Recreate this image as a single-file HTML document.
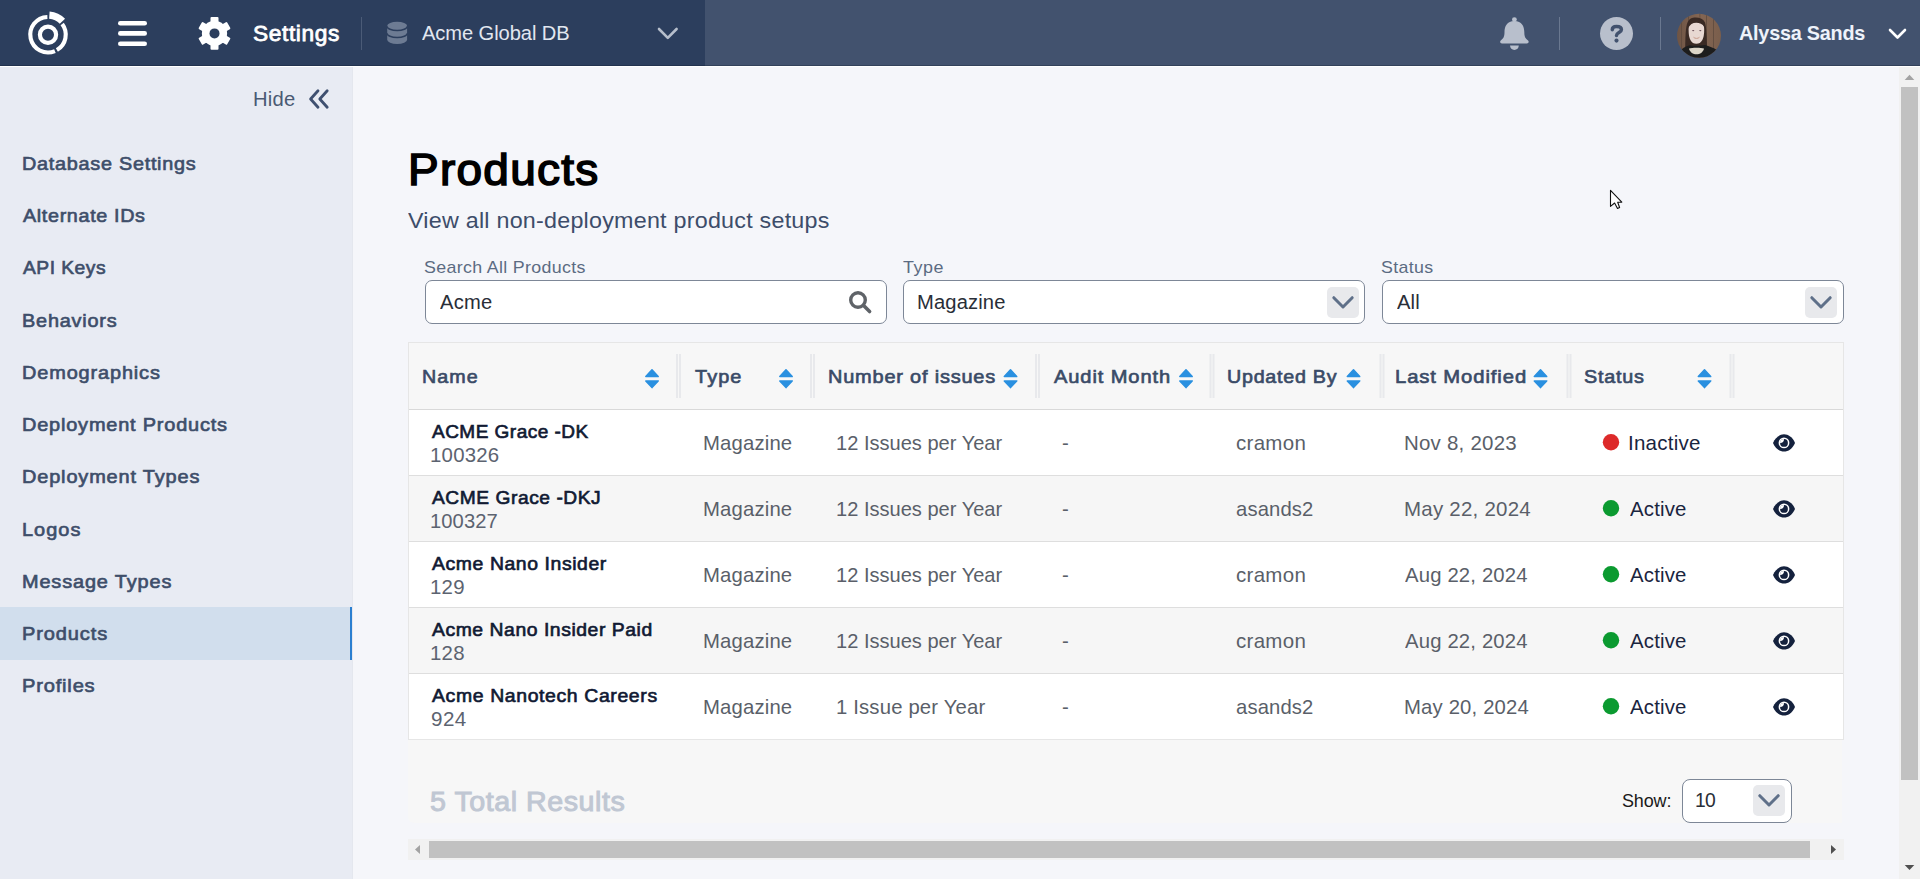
<!DOCTYPE html><html><head><meta charset="utf-8"><title>Products</title><style>
*{margin:0;padding:0;box-sizing:border-box}
html,body{width:1920px;height:879px;overflow:hidden;background:#f5f6fa;font-family:"Liberation Sans", sans-serif}
.t{position:absolute;white-space:nowrap;transform-origin:0 0}
.b{position:absolute}
</style></head><body>
<div class="b" style="left:0px;top:0px;width:705px;height:66px;background:#2c3e5d"></div>
<div class="b" style="left:705px;top:0px;width:1215px;height:66px;background:#42526e"></div>
<div class="b" style="left:0px;top:65px;width:1920px;height:1px;background:rgba(10,20,40,0.28)"></div>
<div class="b" style="left:0px;top:66px;width:1920px;height:1px;background:#ffffff"></div>
<div class="b" style="left:0px;top:67px;width:352px;height:812px;background:#e8ebf3"></div>
<div class="b" style="left:352px;top:67px;width:1px;height:812px;background:#e4e7ee"></div>
<div class="b" style="left:0px;top:607px;width:350px;height:52.5px;background:#d1deed"></div>
<div class="b" style="left:350px;top:607px;width:2px;height:52.5px;background:#2b7fd0"></div>
<div class="b" style="left:425px;top:280px;width:462px;height:44px;background:#fff;border:1.5px solid #7d8797;border-radius:7px"></div>
<div class="b" style="left:903px;top:280px;width:462px;height:44px;background:#fff;border:1.5px solid #7d8797;border-radius:7px"></div>
<div class="b" style="left:1382px;top:280px;width:462px;height:44px;background:#fff;border:1.5px solid #7d8797;border-radius:7px"></div>
<div class="b" style="left:408px;top:342px;width:1436px;height:398px;background:#fff;border:1px solid #e6e6e6"></div>
<div class="b" style="left:409px;top:343px;width:1434px;height:66px;background:#f7f7f7"></div>
<div class="b" style="left:409px;top:409px;width:1434px;height:1px;background:#d9d9d9"></div>
<div class="b" style="left:409px;top:475px;width:1434px;height:1px;background:#dedede"></div>
<div class="b" style="left:409px;top:476px;width:1434px;height:65px;background:#f6f6f6"></div>
<div class="b" style="left:409px;top:541px;width:1434px;height:1px;background:#dedede"></div>
<div class="b" style="left:409px;top:607px;width:1434px;height:1px;background:#dedede"></div>
<div class="b" style="left:409px;top:608px;width:1434px;height:65px;background:#f6f6f6"></div>
<div class="b" style="left:409px;top:673px;width:1434px;height:1px;background:#dedede"></div>
<div class="b" style="left:408px;top:740px;width:1434px;height:83px;background:#f7f7f7;border-bottom-left-radius:6px"></div>
<div class="b" style="left:1682px;top:779px;width:110px;height:44px;background:#fff;border:1.5px solid #7d8797;border-radius:8px"></div>
<div class="b" style="left:408px;top:839px;width:1436px;height:21px;background:#f1f1f1"></div>
<div class="b" style="left:429px;top:841px;width:1381px;height:16.5px;background:#c1c1c1"></div>
<div class="b" style="left:1899px;top:67px;width:21px;height:812px;background:#f1f1f1"></div>
<div class="b" style="left:1901px;top:87px;width:17px;height:692.6px;background:#c1c1c1"></div>
<svg class="b" style="left:0;top:0" width="1920" height="879" viewBox="0 0 1920 879"><circle cx="48" cy="34.7" r="8.1" stroke="#ffffff" stroke-width="4.2" fill="none"/><path d="M54.94 51.04 A17.75 17.75 0 1 1 47.38 16.96" stroke="#ffffff" stroke-width="4.1" fill="none"/><path d="M62.18 24.02 A17.75 17.75 0 0 1 56.88 50.07" stroke="#ffffff" stroke-width="4.1" fill="none"/><path d="M49.37 15.05 A19.7 19.7 0 0 1 62.41 21.26" stroke="#ffffff" stroke-width="7.2" fill="none"/><rect x="118" y="21.0" width="29" height="4.6" rx="2.3" fill="#fff"/><rect x="118" y="31.099999999999998" width="29" height="4.6" rx="2.3" fill="#fff"/><rect x="118" y="41.5" width="29" height="4.6" rx="2.3" fill="#fff"/><circle cx="214.5" cy="33.4" r="12.6" fill="#fff"/><rect x="210.5" y="17.0" width="8.0" height="16.4" rx="1" fill="#fff" transform="rotate(0 214.5 33.4)"/><rect x="210.5" y="17.0" width="8.0" height="16.4" rx="1" fill="#fff" transform="rotate(60 214.5 33.4)"/><rect x="210.5" y="17.0" width="8.0" height="16.4" rx="1" fill="#fff" transform="rotate(120 214.5 33.4)"/><rect x="210.5" y="17.0" width="8.0" height="16.4" rx="1" fill="#fff" transform="rotate(180 214.5 33.4)"/><rect x="210.5" y="17.0" width="8.0" height="16.4" rx="1" fill="#fff" transform="rotate(240 214.5 33.4)"/><rect x="210.5" y="17.0" width="8.0" height="16.4" rx="1" fill="#fff" transform="rotate(300 214.5 33.4)"/><circle cx="214.5" cy="33.4" r="5.0" fill="#2c3e5d"/><rect x="361" y="17" width="1" height="33" fill="#4b5b77"/><path d="M387.2 26 A9.95 4.2 0 0 1 407.1 26 L407.1 39.8 A9.95 4.2 0 0 1 387.2 39.8 Z" fill="#6d7b93"/><path d="M387 26.2 A10.1 4.3 0 0 0 407.3 26.2" stroke="#2c3e5d" stroke-width="1.5" fill="none"/><path d="M387 33.2 A10.1 4.3 0 0 0 407.3 33.2" stroke="#2c3e5d" stroke-width="1.5" fill="none"/><path d="M659 29 L667.8 37.8 L676.6 29" stroke="#b7bfcc" stroke-width="2.6" fill="none" stroke-linecap="round" stroke-linejoin="round"/><circle cx="1514.4" cy="19.6" r="2.4" fill="#b8bfcc"/><path d="M1514.4 21 C1507 21 1504.5 26.5 1504.5 32 C1504.5 36.5 1503.5 38.5 1501 40.2 C1499.5 41.2 1500 43.4 1502 43.4 L1526.8 43.4 C1528.8 43.4 1529.3 41.2 1527.8 40.2 C1525.3 38.5 1524.3 36.5 1524.3 32 C1524.3 26.5 1521.8 21 1514.4 21 Z" fill="#b8bfcc"/><path d="M1510 45.6 L1518.8 45.6 C1518.8 48.2 1516.8 50 1514.4 50 C1512 50 1510 48.2 1510 45.6 Z" fill="#b8bfcc"/><rect x="1559" y="17" width="1" height="33" fill="#6a7890"/><circle cx="1616.5" cy="33.5" r="16.5" fill="#b8bfcc"/><path d="M1612.3 29.8 C1612.3 27 1614.2 26.6 1616.6 26.6 C1619.6 26.6 1621.4 27.6 1621.4 29.8 C1621.4 32.6 1616.5 32.6 1616.5 35.6" stroke="#42526e" stroke-width="3.5" fill="none" stroke-linecap="round"/><circle cx="1616.5" cy="40.6" r="2.05" fill="#42526e"/><rect x="1660" y="17" width="1" height="33" fill="#6a7890"/><defs><clipPath id="av"><circle cx="1699" cy="35.8" r="22"/></clipPath><linearGradient id="wood" x1="0" x2="1"><stop offset="0" stop-color="#6e5444"/><stop offset="0.5" stop-color="#846653"/><stop offset="1" stop-color="#7a5e4c"/></linearGradient></defs><g clip-path="url(#av)"><rect x="1677" y="13" width="44" height="45" fill="url(#wood)"/><rect x="1681" y="13" width="0.8" height="45" fill="#5e4a3e"/><rect x="1688" y="13" width="0.8" height="45" fill="#5e4a3e"/><rect x="1699.5" y="13" width="0.8" height="45" fill="#604c40"/><rect x="1706" y="13" width="0.8" height="45" fill="#5e4a3e"/><rect x="1713" y="13" width="0.8" height="45" fill="#5e4a3e"/><path d="M1685.2 48 C1685.3 38 1685.5 27 1687.5 22.5 C1689.5 18.5 1692 17.6 1695.5 17.6 C1700 17.6 1703.5 19.5 1705 22.5 C1706.5 27 1706.8 38 1707 48 Z" fill="#3a2a24"/><path d="M1688.6 30 C1688.6 24 1691 20.8 1696.3 20.8 C1701.8 20.8 1704.2 24 1704.2 30 C1704.2 39 1701.5 43.8 1696.3 43.8 C1691.2 43.8 1688.6 39 1688.6 30 Z" fill="#e8d8d2"/><path d="M1688.2 28 C1688.5 21.5 1692 19.5 1696.3 19.5 C1701 19.5 1704.3 21.5 1704.5 27 C1702.5 24 1699.5 22.8 1696.3 22.8 C1692.5 22.8 1690 24.5 1688.2 28 Z" fill="#3a2a24"/><ellipse cx="1693.2" cy="30.6" rx="1.1" ry="0.6" fill="#6a5058"/><ellipse cx="1700.3" cy="30.6" rx="1.1" ry="0.6" fill="#6a5058"/><path d="M1693.5 37.2 C1695 38.8 1698 38.8 1699.5 37.2" stroke="#c89a8a" stroke-width="1" fill="none"/><path d="M1680 60 L1682 49 C1684 47 1688 45.5 1690 45.2 C1693 46 1700 46 1705 45 C1709 46 1714 48 1717 50 L1720 60 Z" fill="#1d1d1d"/><path d="M1689 48.5 C1692 47.5 1701 47.5 1704 48.5 C1703 52.5 1700 54.3 1696.5 54.3 C1693 54.3 1690 52.5 1689 48.5 Z" fill="#ddd6c8"/></g><path d="M1890 30 L1897.5 37.5 L1905 30" stroke="#ffffff" stroke-width="2.6" fill="none" stroke-linecap="round" stroke-linejoin="round"/><path d="M318 90.8 L310.6 99 L318 107.2 M327.2 90.8 L319.8 99 L327.2 107.2" stroke="#3f5070" stroke-width="2.8" fill="none" stroke-linecap="round" stroke-linejoin="round"/><circle cx="858" cy="300" r="7.3" stroke="#5f6368" stroke-width="3.4" fill="none"/><path d="M863.6 305.6 L869.6 311.6" stroke="#5f6368" stroke-width="3.6" stroke-linecap="round"/><rect x="1327" y="287" width="32" height="31" rx="5" fill="#e8e9ec"/><path d="M1333.80 297.70 L1343.00 307.00 L1352.20 297.70" stroke="#5f7089" stroke-width="3" fill="none" stroke-linecap="round" stroke-linejoin="round"/><rect x="1805" y="287" width="32" height="31" rx="5" fill="#e8e9ec"/><path d="M1811.80 297.70 L1821.00 307.00 L1830.20 297.70" stroke="#5f7089" stroke-width="3" fill="none" stroke-linecap="round" stroke-linejoin="round"/><rect x="1753" y="785" width="32" height="31" rx="5" fill="#e8e9ec"/><path d="M1759.80 795.70 L1769.00 805.00 L1778.20 795.70" stroke="#5f7089" stroke-width="3" fill="none" stroke-linecap="round" stroke-linejoin="round"/><path d="M645.8 376.6 L652 369.8 L658.2 376.6 Z" fill="#2a90e0" stroke="#2a90e0" stroke-width="1.5" stroke-linejoin="round"/><path d="M645.8 380.9 L652 387.6 L658.2 380.9 Z" fill="#2a90e0" stroke="#2a90e0" stroke-width="1.5" stroke-linejoin="round"/><path d="M779.8 376.6 L786 369.8 L792.2 376.6 Z" fill="#2a90e0" stroke="#2a90e0" stroke-width="1.5" stroke-linejoin="round"/><path d="M779.8 380.9 L786 387.6 L792.2 380.9 Z" fill="#2a90e0" stroke="#2a90e0" stroke-width="1.5" stroke-linejoin="round"/><path d="M1004.3 376.6 L1010.5 369.8 L1016.7 376.6 Z" fill="#2a90e0" stroke="#2a90e0" stroke-width="1.5" stroke-linejoin="round"/><path d="M1004.3 380.9 L1010.5 387.6 L1016.7 380.9 Z" fill="#2a90e0" stroke="#2a90e0" stroke-width="1.5" stroke-linejoin="round"/><path d="M1179.8 376.6 L1186 369.8 L1192.2 376.6 Z" fill="#2a90e0" stroke="#2a90e0" stroke-width="1.5" stroke-linejoin="round"/><path d="M1179.8 380.9 L1186 387.6 L1192.2 380.9 Z" fill="#2a90e0" stroke="#2a90e0" stroke-width="1.5" stroke-linejoin="round"/><path d="M1347.3 376.6 L1353.5 369.8 L1359.7 376.6 Z" fill="#2a90e0" stroke="#2a90e0" stroke-width="1.5" stroke-linejoin="round"/><path d="M1347.3 380.9 L1353.5 387.6 L1359.7 380.9 Z" fill="#2a90e0" stroke="#2a90e0" stroke-width="1.5" stroke-linejoin="round"/><path d="M1534.3 376.6 L1540.5 369.8 L1546.7 376.6 Z" fill="#2a90e0" stroke="#2a90e0" stroke-width="1.5" stroke-linejoin="round"/><path d="M1534.3 380.9 L1540.5 387.6 L1546.7 380.9 Z" fill="#2a90e0" stroke="#2a90e0" stroke-width="1.5" stroke-linejoin="round"/><path d="M1698.3 376.6 L1704.5 369.8 L1710.7 376.6 Z" fill="#2a90e0" stroke="#2a90e0" stroke-width="1.5" stroke-linejoin="round"/><path d="M1698.3 380.9 L1704.5 387.6 L1710.7 380.9 Z" fill="#2a90e0" stroke="#2a90e0" stroke-width="1.5" stroke-linejoin="round"/><rect x="676" y="354" width="2" height="44" fill="#e8e9ec"/><rect x="679" y="354" width="2" height="44" fill="#e8e9ec"/><rect x="810" y="354" width="2" height="44" fill="#e8e9ec"/><rect x="813" y="354" width="2" height="44" fill="#e8e9ec"/><rect x="1035" y="354" width="2" height="44" fill="#e8e9ec"/><rect x="1038" y="354" width="2" height="44" fill="#e8e9ec"/><rect x="1209.5" y="354" width="2" height="44" fill="#e8e9ec"/><rect x="1212.5" y="354" width="2" height="44" fill="#e8e9ec"/><rect x="1379.5" y="354" width="2" height="44" fill="#e8e9ec"/><rect x="1382.5" y="354" width="2" height="44" fill="#e8e9ec"/><rect x="1566.5" y="354" width="2" height="44" fill="#e8e9ec"/><rect x="1569.5" y="354" width="2" height="44" fill="#e8e9ec"/><rect x="1729.5" y="354" width="2" height="44" fill="#e8e9ec"/><rect x="1732.5" y="354" width="2" height="44" fill="#e8e9ec"/><circle cx="1611" cy="442.3" r="8.2" fill="#dd2a2a"/><path d="M1773 442.9 C1778 431.4 1790 431.4 1795 442.9 C1790 454.4 1778 454.4 1773 442.9 Z" fill="#14213d"/><circle cx="1784" cy="442.9" r="5.4" fill="#fff"/><circle cx="1784" cy="442.9" r="3.9" fill="#14213d"/><path d="M1780 442.9 A4 4 0 0 0 1784 438.9 A4 4 0 0 0 1780 442.9 Z" fill="#fff"/><circle cx="1611" cy="508.3" r="8.2" fill="#0b9a30"/><path d="M1773 508.9 C1778 497.4 1790 497.4 1795 508.9 C1790 520.4 1778 520.4 1773 508.9 Z" fill="#14213d"/><circle cx="1784" cy="508.9" r="5.4" fill="#fff"/><circle cx="1784" cy="508.9" r="3.9" fill="#14213d"/><path d="M1780 508.9 A4 4 0 0 0 1784 504.9 A4 4 0 0 0 1780 508.9 Z" fill="#fff"/><circle cx="1611" cy="574.3" r="8.2" fill="#0b9a30"/><path d="M1773 574.9 C1778 563.4 1790 563.4 1795 574.9 C1790 586.4 1778 586.4 1773 574.9 Z" fill="#14213d"/><circle cx="1784" cy="574.9" r="5.4" fill="#fff"/><circle cx="1784" cy="574.9" r="3.9" fill="#14213d"/><path d="M1780 574.9 A4 4 0 0 0 1784 570.9 A4 4 0 0 0 1780 574.9 Z" fill="#fff"/><circle cx="1611" cy="640.3" r="8.2" fill="#0b9a30"/><path d="M1773 640.9 C1778 629.4 1790 629.4 1795 640.9 C1790 652.4 1778 652.4 1773 640.9 Z" fill="#14213d"/><circle cx="1784" cy="640.9" r="5.4" fill="#fff"/><circle cx="1784" cy="640.9" r="3.9" fill="#14213d"/><path d="M1780 640.9 A4 4 0 0 0 1784 636.9 A4 4 0 0 0 1780 640.9 Z" fill="#fff"/><circle cx="1611" cy="706.3" r="8.2" fill="#0b9a30"/><path d="M1773 706.9 C1778 695.4 1790 695.4 1795 706.9 C1790 718.4 1778 718.4 1773 706.9 Z" fill="#14213d"/><circle cx="1784" cy="706.9" r="5.4" fill="#fff"/><circle cx="1784" cy="706.9" r="3.9" fill="#14213d"/><path d="M1780 706.9 A4 4 0 0 0 1784 702.9 A4 4 0 0 0 1780 706.9 Z" fill="#fff"/><path d="M1610.5 190.3 L1610.5 206.4 L1614.6 203 L1617.5 208.4 L1619.6 207.5 L1617.7 202.3 L1621.8 202.1 Z" fill="#fff" stroke="#111" stroke-width="1.1" stroke-linejoin="round"/><path d="M415 849.5 L420 845 L420 854 Z" fill="#a3a3a3"/><path d="M1836 849.5 L1831 845 L1831 854 Z" fill="#505050"/><path d="M1909.5 74.8 L1914.3 80 L1904.7 80 Z" fill="#a3a3a3"/><path d="M1909.5 870 L1914.3 865 L1904.7 865 Z" fill="#505050"/></svg>
<div class="t" style="left:253.12px;top:23.00px;transform:scaleX(1.0539);font-size:21.58px;line-height:21.58px;font-weight:400;-webkit-text-stroke:0.755px currentColor;color:#ffffff;letter-spacing:0.562px;">Settings</div>
<div class="t" style="left:422.00px;top:23.00px;transform:scaleX(0.9929);font-size:20.28px;line-height:20.28px;font-weight:400;color:#e2e7f0;letter-spacing:-0.082px;">Acme Global DB</div>
<div class="t" style="left:1739.41px;top:23.00px;transform:scaleX(0.9811);font-size:20.20px;line-height:20.20px;font-weight:700;color:#eef2fa;letter-spacing:-0.227px;">Alyssa Sands</div>
<div class="t" style="left:253.38px;top:90.00px;transform:scaleX(1.0216);font-size:19.77px;line-height:19.77px;font-weight:400;color:#4a5a73;letter-spacing:0.269px;">Hide</div>
<div class="t" style="left:21.61px;top:155.00px;transform:scaleX(1.0782);font-size:18.40px;line-height:18.40px;font-weight:400;-webkit-text-stroke:0.644px currentColor;color:#3e4e6a;letter-spacing:0.675px;">Database Settings</div>
<div class="t" style="left:23.20px;top:207.00px;transform:scaleX(1.0737);font-size:18.40px;line-height:18.40px;font-weight:400;-webkit-text-stroke:0.644px currentColor;color:#3e4e6a;letter-spacing:0.608px;">Alternate IDs</div>
<div class="t" style="left:23.18px;top:259.00px;transform:scaleX(1.0456);font-size:18.40px;line-height:18.40px;font-weight:400;-webkit-text-stroke:0.644px currentColor;color:#3e4e6a;letter-spacing:0.471px;">API Keys</div>
<div class="t" style="left:21.61px;top:312.00px;transform:scaleX(1.0797);font-size:18.40px;line-height:18.40px;font-weight:400;-webkit-text-stroke:0.644px currentColor;color:#3e4e6a;letter-spacing:0.742px;">Behaviors</div>
<div class="t" style="left:21.61px;top:364.00px;transform:scaleX(1.0820);font-size:18.40px;line-height:18.40px;font-weight:400;-webkit-text-stroke:0.644px currentColor;color:#3e4e6a;letter-spacing:0.807px;">Demographics</div>
<div class="t" style="left:21.60px;top:416.00px;transform:scaleX(1.0835);font-size:18.40px;line-height:18.40px;font-weight:400;-webkit-text-stroke:0.644px currentColor;color:#3e4e6a;letter-spacing:0.746px;">Deployment Products</div>
<div class="t" style="left:21.60px;top:468.00px;transform:scaleX(1.0841);font-size:18.40px;line-height:18.40px;font-weight:400;-webkit-text-stroke:0.644px currentColor;color:#3e4e6a;letter-spacing:0.779px;">Deployment Types</div>
<div class="t" style="left:21.60px;top:521.00px;transform:scaleX(1.0836);font-size:18.40px;line-height:18.40px;font-weight:400;-webkit-text-stroke:0.644px currentColor;color:#3e4e6a;letter-spacing:0.940px;">Logos</div>
<div class="t" style="left:21.61px;top:573.00px;transform:scaleX(1.0818);font-size:18.40px;line-height:18.40px;font-weight:400;-webkit-text-stroke:0.644px currentColor;color:#3e4e6a;letter-spacing:0.801px;">Message Types</div>
<div class="t" style="left:21.60px;top:625.00px;transform:scaleX(1.0879);font-size:18.40px;line-height:18.40px;font-weight:400;-webkit-text-stroke:0.644px currentColor;color:#3e4e6a;letter-spacing:0.821px;">Products</div>
<div class="t" style="left:21.59px;top:677.00px;transform:scaleX(1.0936);font-size:18.40px;line-height:18.40px;font-weight:400;-webkit-text-stroke:0.644px currentColor;color:#3e4e6a;letter-spacing:0.733px;">Profiles</div>
<div class="t" style="left:408.14px;top:148.00px;transform:scaleX(1.0522);font-size:43.71px;line-height:43.71px;font-weight:400;-webkit-text-stroke:1.530px currentColor;color:#000000;letter-spacing:1.199px;">Products</div>
<div class="t" style="left:408.27px;top:209.00px;transform:scaleX(1.0214);font-size:22.82px;line-height:22.82px;font-weight:400;color:#3d4d6a;letter-spacing:0.229px;">View all non-deployment product setups</div>
<div class="t" style="left:424.11px;top:259.00px;transform:scaleX(1.0399);font-size:17.15px;line-height:17.15px;font-weight:400;color:#5b6b82;letter-spacing:0.316px;">Search All Products</div>
<div class="t" style="left:903.39px;top:259.00px;transform:scaleX(1.0449);font-size:17.15px;line-height:17.15px;font-weight:400;color:#5b6b82;letter-spacing:0.516px;">Type</div>
<div class="t" style="left:1381.11px;top:259.00px;transform:scaleX(1.0375);font-size:17.15px;line-height:17.15px;font-weight:400;color:#5b6b82;letter-spacing:0.341px;">Status</div>
<div class="t" style="left:440.00px;top:293.00px;transform:scaleX(1.0127);font-size:19.91px;line-height:19.91px;font-weight:400;color:#292e37;letter-spacing:0.209px;">Acme</div>
<div class="t" style="left:917.14px;top:293.00px;transform:scaleX(1.0127);font-size:19.91px;line-height:19.91px;font-weight:400;color:#292e37;letter-spacing:0.146px;">Magazine</div>
<div class="t" style="left:1397.30px;top:293.00px;transform:scaleX(1.0141);font-size:19.91px;line-height:19.91px;font-weight:400;color:#292e37;letter-spacing:0.146px;">All</div>
<div class="t" style="left:422.22px;top:368.00px;transform:scaleX(1.0699);font-size:18.40px;line-height:18.40px;font-weight:400;-webkit-text-stroke:0.644px currentColor;color:#3a4b67;letter-spacing:1.034px;">Name</div>
<div class="t" style="left:695.40px;top:368.00px;transform:scaleX(1.0825);font-size:18.40px;line-height:18.40px;font-weight:400;-webkit-text-stroke:0.644px currentColor;color:#3a4b67;letter-spacing:0.996px;">Type</div>
<div class="t" style="left:827.55px;top:368.00px;transform:scaleX(1.0847);font-size:18.40px;line-height:18.40px;font-weight:400;-webkit-text-stroke:0.644px currentColor;color:#3a4b67;letter-spacing:0.738px;">Number of issues</div>
<div class="t" style="left:1054.10px;top:368.00px;transform:scaleX(1.0917);font-size:18.40px;line-height:18.40px;font-weight:400;-webkit-text-stroke:0.644px currentColor;color:#3a4b67;letter-spacing:0.821px;">Audit Month</div>
<div class="t" style="left:1227.22px;top:368.00px;transform:scaleX(1.0703);font-size:18.40px;line-height:18.40px;font-weight:400;-webkit-text-stroke:0.644px currentColor;color:#3a4b67;letter-spacing:0.697px;">Updated By</div>
<div class="t" style="left:1395.19px;top:368.00px;transform:scaleX(1.1004);font-size:18.40px;line-height:18.40px;font-weight:400;-webkit-text-stroke:0.644px currentColor;color:#3a4b67;letter-spacing:0.817px;">Last Modified</div>
<div class="t" style="left:1583.91px;top:368.00px;transform:scaleX(1.0758);font-size:18.40px;line-height:18.40px;font-weight:400;-webkit-text-stroke:0.644px currentColor;color:#3a4b67;letter-spacing:0.723px;">Status</div>
<div class="t" style="left:432.18px;top:423.00px;transform:scaleX(1.0422);font-size:18.26px;line-height:18.26px;font-weight:400;-webkit-text-stroke:0.639px currentColor;color:#111a33;letter-spacing:0.451px;">ACME Grace -DK</div>
<div class="t" style="left:430.17px;top:445.00px;transform:scaleX(1.0172);font-size:20.06px;line-height:20.06px;font-weight:400;color:#5c6370;letter-spacing:0.218px;">100326</div>
<div class="t" style="left:702.97px;top:433.00px;transform:scaleX(1.0131);font-size:20.06px;line-height:20.06px;font-weight:400;color:#5a5f69;letter-spacing:0.155px;">Magazine</div>
<div class="t" style="left:835.59px;top:433.00px;transform:scaleX(1.0004);font-size:20.06px;line-height:20.06px;font-weight:400;color:#5a5f69;letter-spacing:0.004px;">12 Issues per Year</div>
<div class="t" style="left:1061.99px;top:433.00px;transform:scaleX(1.0131);font-size:20.06px;line-height:20.06px;font-weight:400;color:#5a5f69;letter-spacing:0.155px;">-</div>
<div class="t" style="left:1236.08px;top:433.00px;transform:scaleX(1.0225);font-size:20.06px;line-height:20.06px;font-weight:400;color:#5a5f69;letter-spacing:0.285px;">cramon</div>
<div class="t" style="left:1403.76px;top:433.00px;transform:scaleX(1.0213);font-size:20.06px;line-height:20.06px;font-weight:400;color:#5a5f69;letter-spacing:0.220px;">Nov 8, 2023</div>
<div class="t" style="left:1628.15px;top:433.00px;transform:scaleX(1.0249);font-size:20.06px;line-height:20.06px;font-weight:400;color:#1a2540;letter-spacing:0.231px;">Inactive</div>
<div class="t" style="left:432.18px;top:489.00px;transform:scaleX(1.0510);font-size:18.26px;line-height:18.26px;font-weight:400;-webkit-text-stroke:0.639px currentColor;color:#111a33;letter-spacing:0.528px;">ACME Grace -DKJ</div>
<div class="t" style="left:430.19px;top:511.00px;transform:scaleX(1.0063);font-size:20.06px;line-height:20.06px;font-weight:400;color:#5c6370;letter-spacing:0.081px;">100327</div>
<div class="t" style="left:702.97px;top:499.00px;transform:scaleX(1.0131);font-size:20.06px;line-height:20.06px;font-weight:400;color:#5a5f69;letter-spacing:0.155px;">Magazine</div>
<div class="t" style="left:835.59px;top:499.00px;transform:scaleX(1.0004);font-size:20.06px;line-height:20.06px;font-weight:400;color:#5a5f69;letter-spacing:0.004px;">12 Issues per Year</div>
<div class="t" style="left:1061.99px;top:499.00px;transform:scaleX(1.0131);font-size:20.06px;line-height:20.06px;font-weight:400;color:#5a5f69;letter-spacing:0.155px;">-</div>
<div class="t" style="left:1236.09px;top:499.00px;transform:scaleX(1.0100);font-size:20.06px;line-height:20.06px;font-weight:400;color:#5a5f69;letter-spacing:0.123px;">asands2</div>
<div class="t" style="left:1403.76px;top:499.00px;transform:scaleX(1.0216);font-size:20.06px;line-height:20.06px;font-weight:400;color:#5a5f69;letter-spacing:0.229px;">May 22, 2024</div>
<div class="t" style="left:1630.00px;top:499.00px;transform:scaleX(1.0172);font-size:20.06px;line-height:20.06px;font-weight:400;color:#1a2540;letter-spacing:0.181px;">Active</div>
<div class="t" style="left:432.19px;top:555.00px;transform:scaleX(1.0615);font-size:18.26px;line-height:18.26px;font-weight:400;-webkit-text-stroke:0.639px currentColor;color:#111a33;letter-spacing:0.564px;">Acme Nano Insider</div>
<div class="t" style="left:430.17px;top:577.00px;transform:scaleX(1.0172);font-size:20.06px;line-height:20.06px;font-weight:400;color:#5c6370;letter-spacing:0.218px;">129</div>
<div class="t" style="left:702.97px;top:565.00px;transform:scaleX(1.0131);font-size:20.06px;line-height:20.06px;font-weight:400;color:#5a5f69;letter-spacing:0.155px;">Magazine</div>
<div class="t" style="left:835.59px;top:565.00px;transform:scaleX(1.0004);font-size:20.06px;line-height:20.06px;font-weight:400;color:#5a5f69;letter-spacing:0.004px;">12 Issues per Year</div>
<div class="t" style="left:1061.99px;top:565.00px;transform:scaleX(1.0131);font-size:20.06px;line-height:20.06px;font-weight:400;color:#5a5f69;letter-spacing:0.155px;">-</div>
<div class="t" style="left:1236.08px;top:565.00px;transform:scaleX(1.0225);font-size:20.06px;line-height:20.06px;font-weight:400;color:#5a5f69;letter-spacing:0.285px;">cramon</div>
<div class="t" style="left:1405.40px;top:565.00px;transform:scaleX(1.0131);font-size:20.06px;line-height:20.06px;font-weight:400;color:#5a5f69;letter-spacing:0.155px;">Aug 22, 2024</div>
<div class="t" style="left:1630.00px;top:565.00px;transform:scaleX(1.0172);font-size:20.06px;line-height:20.06px;font-weight:400;color:#1a2540;letter-spacing:0.181px;">Active</div>
<div class="t" style="left:432.19px;top:621.00px;transform:scaleX(1.0594);font-size:18.26px;line-height:18.26px;font-weight:400;-webkit-text-stroke:0.639px currentColor;color:#111a33;letter-spacing:0.525px;">Acme Nano Insider Paid</div>
<div class="t" style="left:430.17px;top:643.00px;transform:scaleX(1.0172);font-size:20.06px;line-height:20.06px;font-weight:400;color:#5c6370;letter-spacing:0.218px;">128</div>
<div class="t" style="left:702.97px;top:631.00px;transform:scaleX(1.0131);font-size:20.06px;line-height:20.06px;font-weight:400;color:#5a5f69;letter-spacing:0.155px;">Magazine</div>
<div class="t" style="left:835.59px;top:631.00px;transform:scaleX(1.0004);font-size:20.06px;line-height:20.06px;font-weight:400;color:#5a5f69;letter-spacing:0.004px;">12 Issues per Year</div>
<div class="t" style="left:1061.99px;top:631.00px;transform:scaleX(1.0131);font-size:20.06px;line-height:20.06px;font-weight:400;color:#5a5f69;letter-spacing:0.155px;">-</div>
<div class="t" style="left:1236.08px;top:631.00px;transform:scaleX(1.0225);font-size:20.06px;line-height:20.06px;font-weight:400;color:#5a5f69;letter-spacing:0.285px;">cramon</div>
<div class="t" style="left:1405.40px;top:631.00px;transform:scaleX(1.0131);font-size:20.06px;line-height:20.06px;font-weight:400;color:#5a5f69;letter-spacing:0.155px;">Aug 22, 2024</div>
<div class="t" style="left:1630.00px;top:631.00px;transform:scaleX(1.0172);font-size:20.06px;line-height:20.06px;font-weight:400;color:#1a2540;letter-spacing:0.181px;">Active</div>
<div class="t" style="left:432.19px;top:687.00px;transform:scaleX(1.0632);font-size:18.26px;line-height:18.26px;font-weight:400;-webkit-text-stroke:0.639px currentColor;color:#111a33;letter-spacing:0.594px;">Acme Nanotech Careers</div>
<div class="t" style="left:430.77px;top:709.00px;transform:scaleX(1.0283);font-size:20.06px;line-height:20.06px;font-weight:400;color:#5c6370;letter-spacing:0.439px;">924</div>
<div class="t" style="left:702.97px;top:697.00px;transform:scaleX(1.0131);font-size:20.06px;line-height:20.06px;font-weight:400;color:#5a5f69;letter-spacing:0.155px;">Magazine</div>
<div class="t" style="left:835.57px;top:697.00px;transform:scaleX(1.0131);font-size:20.06px;line-height:20.06px;font-weight:400;color:#5a5f69;letter-spacing:0.155px;">1 Issue per Year</div>
<div class="t" style="left:1061.99px;top:697.00px;transform:scaleX(1.0131);font-size:20.06px;line-height:20.06px;font-weight:400;color:#5a5f69;letter-spacing:0.155px;">-</div>
<div class="t" style="left:1236.09px;top:697.00px;transform:scaleX(1.0100);font-size:20.06px;line-height:20.06px;font-weight:400;color:#5a5f69;letter-spacing:0.123px;">asands2</div>
<div class="t" style="left:1403.77px;top:697.00px;transform:scaleX(1.0131);font-size:20.06px;line-height:20.06px;font-weight:400;color:#5a5f69;letter-spacing:0.155px;">May 20, 2024</div>
<div class="t" style="left:1630.00px;top:697.00px;transform:scaleX(1.0172);font-size:20.06px;line-height:20.06px;font-weight:400;color:#1a2540;letter-spacing:0.181px;">Active</div>
<div class="t" style="left:430.33px;top:788.00px;transform:scaleX(1.0411);font-size:27.52px;line-height:27.52px;font-weight:400;-webkit-text-stroke:0.963px currentColor;color:#c0c7d3;letter-spacing:0.504px;">5 Total Results</div>
<div class="t" style="left:1622.10px;top:792.00px;transform:scaleX(0.9899);font-size:18.17px;line-height:18.17px;font-weight:400;color:#1a1a1a;letter-spacing:-0.122px;">Show:</div>
<div class="t" style="left:1695.46px;top:791.00px;transform:scaleX(0.9692);font-size:19.91px;line-height:19.91px;font-weight:400;color:#292e37;letter-spacing:-0.626px;">10</div>
</body></html>
